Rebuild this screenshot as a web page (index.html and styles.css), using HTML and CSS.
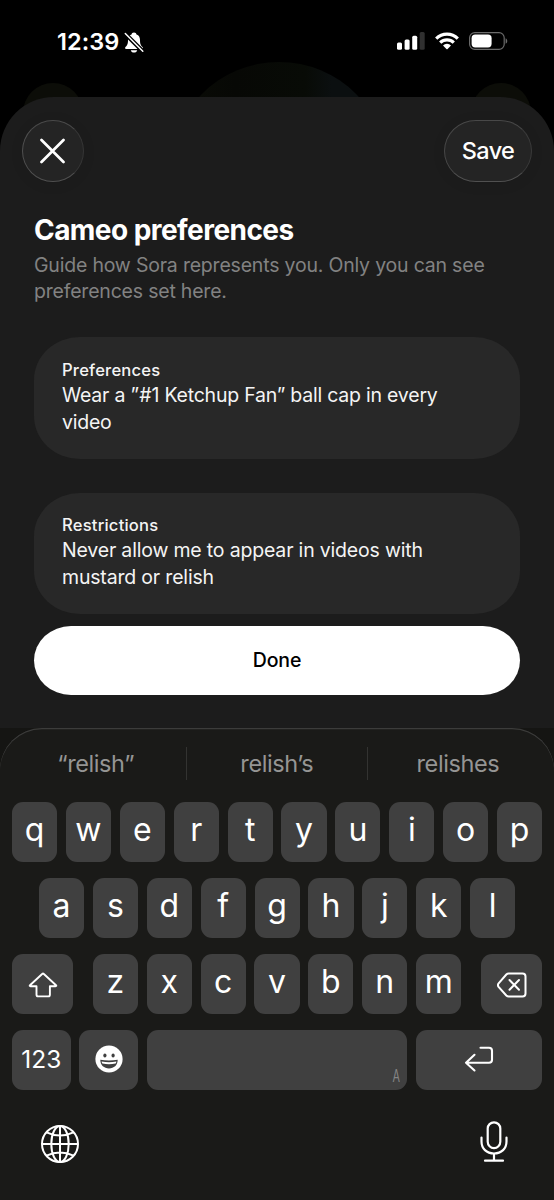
FILE: index.html
```html
<!DOCTYPE html>
<html lang="en">
<head>
<meta charset="utf-8">
<title>Cameo preferences</title>
<link rel="stylesheet" href="styles.css">
</head>
<body>
<div class="phone">
  <header class="status">
    <div class="status-left">
      <span class="time">12:39</span>
      <svg class="bell" width="20" height="21" viewBox="0 0 20 21">
        <path fill="#fff" d="M10 .5c-1.500 0-2.300.9-2.500 2C5 3.200 4 5.400 4 8c0 4.300-1 5.600-2.500 7-.9.900-.5 2 .7 2h15.600c1.200 0 1.600-1.100.7-2C17 13.600 16 12.300 16 8c0-2.600-1-4.800-3.500-5.500-.2-1.100-1-2-2.500-2zM6.800 18.200h6.400c-.3 1.400-1.600 2.300-3.200 2.300s-2.900-.9-3.200-2.300z"/>
        <path stroke="#000" stroke-width="4.200" d="M1 1.500 19 19.500"/>
        <path stroke="#fff" stroke-width="1.500" stroke-linecap="round" d="M1.300 1.500 18.800 19.300"/>
      </svg>
    </div>
    <div class="status-right">
      <svg width="28" height="18" viewBox="0 0 28 18">
        <rect x="0" y="10.500" width="5" height="7.200" rx="1.500" fill="#fff"/>
        <rect x="7.600" y="7.500" width="5" height="10.200" rx="1.500" fill="#fff"/>
        <rect x="15.200" y="3.700" width="5" height="14" rx="1.500" fill="#fff"/>
        <rect x="22.700" y="0" width="5" height="17.700" rx="1.500" fill="#303030"/>
      </svg>
      <svg class="wifi" width="24" height="18" viewBox="0 0 24 18">
        <g fill="none" stroke="#fff" stroke-width="3.200">
          <path d="M1.200 6.600a15.400 15.400 0 0 1 21.600 0"/>
          <path d="M5.200 10.700a9.700 9.700 0 0 1 13.600 0"/>
        </g>
        <path fill="#fff" d="M8 13.500a5.600 5.600 0 0 1 8 0l-3.400 3.500q-.6.600-1.200 0z"/>
      </svg>
      <svg class="battery" width="39" height="18" viewBox="0 0 39 18">
        <rect x=".6" y=".6" width="34.600" height="16.800" rx="5.200" fill="none" stroke="#6b6b6b" stroke-width="1.200"/>
        <rect x="2.600" y="2.600" width="20" height="12.800" rx="3.600" fill="#fff"/>
        <path d="M36.600 6.200c2.200 1 2.200 4.600 0 5.600z" fill="#6b6b6b"/>
      </svg>
    </div>
    <i class="orb orb-left"></i><i class="orb orb-right"></i><i class="avatar"></i>
  </header>

  <main class="sheet">
    <div class="toolbar">
      <button class="glass close" aria-label="Close">
        <svg width="26" height="26" viewBox="0 0 26 26"><path d="M1.500 2 23.500 24M23.500 2 1.500 24" stroke="#fff" stroke-width="2.700" stroke-linecap="round"/></svg>
      </button>
      <button class="glass save">Save</button>
    </div>
    <section class="content">
      <h1 class="title">Cameo preferences</h1>
      <p class="subtitle">Guide how Sora represents you. Only you can see<br>preferences set here.</p>
      <div class="card">
        <h2 class="label">Preferences</h2>
        <p class="text wear">Wear a <span class="quote">”</span>#1 Ketchup Fan” ball cap in every<br>video</p>
      </div>
      <div class="card second">
        <h2 class="label">Restrictions</h2>
        <p class="text">Never allow me to appear in videos with<br>mustard or relish</p>
      </div>
      <button class="done">Done</button>
    </section>
  </main>

  <section class="keyboard-area">
    <div class="keyboard">
      <div class="suggestions">
        <span>“relish”</span><i class="sep"></i><span>relish’s</span><i class="sep"></i><span>relishes</span>
      </div>
      <div class="keys">
        <div class="row">
          <b>q</b><b>w</b><b>e</b><b>r</b><b>t</b><b>y</b><b>u</b><b>i</b><b>o</b><b>p</b>
        </div>
        <div class="row inset">
          <b>a</b><b>s</b><b>d</b><b>f</b><b>g</b><b>h</b><b>j</b><b>k</b><b>l</b>
        </div>
        <div class="row split">
          <b class="mod"><svg width="30" height="26" viewBox="0 0 30 26"><path d="M14.400 1.700q.6-.6 1.200 0L28 13.200q.9 1-.5 1h-5.600v8.600q0 1.600-1.600 1.600H10.100q-1.600 0-1.600-1.600v-8.600H2.500q-1.400 0-.5-1z" fill="none" stroke="#fff" stroke-width="1.900" stroke-linejoin="round"/></svg></b>
          <div class="letters"><b>z</b><b>x</b><b>c</b><b>v</b><b>b</b><b>n</b><b>m</b></div>
          <b class="mod"><svg width="30" height="26" viewBox="0 0 30 26"><path d="M11.700 1.500H25.500a3 3 0 0 1 3 3v17a3 3 0 0 1-3 3H11.700q-1.400 0-2.400-1L1.600 14.800q-1.400-1.800 0-3.500L9.300 2.500q1-1 2.400-1z" fill="none" stroke="#fff" stroke-width="2"/><path d="M12.500 8 22 17.800M22 8l-9.500 9.800" stroke="#fff" stroke-width="2" stroke-linecap="round"/></svg></b>
        </div>
        <div class="row">
          <b class="num">123</b>
          <b class="emoji"><svg width="28" height="28" viewBox="0 0 28 28"><circle cx="14" cy="14" r="13.600" fill="#fff"/><ellipse cx="9.900" cy="10.500" rx="1.600" ry="2.100" fill="#404040"/><ellipse cx="18.100" cy="10.500" rx="1.600" ry="2.100" fill="#404040"/><path d="M5.300 14.800q8.700 1.600 17.400 0c-.1 5.400-3.800 8.700-8.700 8.700s-8.600-3.300-8.700-8.700z" fill="#404040"/><path d="M6.600 16.500q7.400 1.400 14.800 0-.2 1.300-.8 2.100-6.600 1.300-13.200 0-.6-.8-.8-2.100z" fill="#fff"/></svg></b>
          <b class="space"><span>A</span></b>
          <b class="return"><svg width="30" height="26" viewBox="0 0 30 26"><path d="M16.500 1.800H25q3 0 3 3v9q0 3-3 3H2M10.500 8.800 2 16.800l8.500 7.700" fill="none" stroke="#fff" stroke-width="2.100" stroke-linecap="round" stroke-linejoin="round"/></svg></b>
        </div>
      </div>
      <div class="bottom">
        <svg width="40" height="40" viewBox="0 0 40 40" fill="none" stroke="#fff" stroke-width="2">
          <circle cx="20" cy="20" r="18"/><ellipse cx="20" cy="20" rx="8.700" ry="18"/><path d="M20 2v36M2 20h36M6.500 8.300q13.500 6.400 27 0M6.500 31.700q13.500-6.400 27 0"/>
        </svg>
        <svg class="mic" width="28" height="42" viewBox="0 0 28 42" fill="none" stroke="#fff" stroke-width="2.200" stroke-linecap="round">
          <rect x="7.700" y="1.300" width="12.600" height="25.800" rx="6.300"/><path d="M1.500 16.500v4c0 7 5 12 12.500 12s12.500-5 12.500-12v-4M14 32.500v7M5 39.700h18"/>
        </svg>
      </div>
    </div>
  </section>
</div>
</body>
</html>
```
FILE: styles.css
```css
* { box-sizing: border-box; margin: 0; padding: 0; }
body { background: #000; font-family: Inter, "Liberation Sans", sans-serif; color: #fff; }
button { border: 0; font: inherit; color: inherit; display: flex; align-items: center; justify-content: center; }
svg { display: block; flex: none; }
.phone { width: 554px; height: 1200px; overflow: hidden; display: flex; flex-direction: column; background: #000; }

.status { position: relative; height: 97px; flex: none; display: flex; justify-content: space-between; align-items: flex-start; padding: 32px 46px 0 57px; }
.status-left, .status-right { display: flex; position: relative; z-index: 1; }
.status-left { gap: 5px; }
.time { font-size: 23.500px; font-weight: 600; line-height: 19px; letter-spacing: 0.050px; }
.status-right { align-items: center; }
.wifi { margin-left: 10px; }
.battery { margin-left: 10px; }
.orb, .avatar { position: absolute; border-radius: 50%; }
.orb { width: 60px; height: 60px; top: 83px; background: #0c0d08; }
.orb-left { left: 23px; }
.orb-right { right: 23px; }
.avatar { width: 218px; height: 218px; left: 170px; top: 62px; background: linear-gradient(90deg, #0a0c06 0, #070805 30%, #080b06 62%, #0b0f10 74%); }

.sheet { position: relative; flex: none; height: 631px; background: #1c1c1c; border-radius: 54px 54px 0 0; padding-top: 22.500px; }
.toolbar { display: flex; justify-content: space-between; padding: 0 22px 0 22.400px; height: 62px; }
.glass { height: 62px; background: #242424; border: 1.300px solid #484848; box-shadow: 0 2px 14px rgba(0,0,0,.08); }
.close { width: 62px; border-radius: 50%; border-color: #4a4a4a #363636 #505050 #505050; }
.save { width: 88px; border-radius: 32px / 31px; font-size: 23.500px; font-weight: 500; letter-spacing: -0.6px; border-color: #484848 #3a3a3a #505050 #484848; }
.content { padding: 31.500px 34px 0; }
.title { font-size: 28px; line-height: 34px; font-weight: 700; letter-spacing: -0.55px; white-space: nowrap; }
.subtitle { margin-top: 4.500px; margin-bottom: -0.500px; font-size: 19.500px; line-height: 26.700px; color: #828282; white-space: nowrap; letter-spacing: -0.2px; }
.card { margin-top: 33px; height: 121.500px; padding: 21.500px 28px 0; background: #282828; border-radius: 46px / 43px; white-space: nowrap; color: #f4f4f4; }
.card.second { margin-top: 34px; }
.label { font-size: 16.600px; line-height: 22px; font-weight: 500; letter-spacing: .2px; }
.text { padding-top: 1px; font-size: 19.500px; line-height: 26.700px; letter-spacing: -0.180px; }
.text.wear { letter-spacing: -0.220px; }
.quote { letter-spacing: .3px; }
.done { width: 100%; height: 69px; margin-top: 11.500px; background: #fff; color: #000; border-radius: 37px / 34.500px; font-size: 19.500px; font-weight: 500; letter-spacing: -0.1px; padding-bottom: 0.500px; }

.keyboard-area { flex: 1; background: #151513; }
.keyboard { height: 472px; background: #1a1a18; border-radius: 42px 42px 0 0; box-shadow: inset 0 1.200px 0 #3c3c3b; }
.suggestions { height: 73.500px; padding: 19px 6px 0 5.600px; display: flex; }
.suggestions span { flex: 1; text-align: center; font-size: 23.500px; line-height: 33px; color: #959594; letter-spacing: -0.4px; }
.sep { width: 1px; height: 33px; background: #333331; }
.keys { padding: 0 12px; display: flex; flex-direction: column; gap: 15.600px; }
.row, .letters { display: flex; gap: 8.800px; }
.row.inset { padding: 0 27px; }
.split { justify-content: space-between; }
.row b { width: 45.100px; height: 60.500px; flex: none; border-radius: 11px; background: #404040; display: flex; align-items: center; justify-content: center; font-size: 32px; font-weight: 400; line-height: 56px; padding-bottom: 4px; }
.row b.mod { width: 61px; padding: 2px 0 0; }
.row b.num { width: 58.700px; font-size: 24.500px; padding: 0 0 3px; }
.row b.emoji { width: 58.700px; padding: 0 0 2px; }
.row b.space { width: 260.500px; justify-content: flex-end; align-items: flex-end; padding: 0 8px 6px 0; }
.space span { font-family: "Liberation Sans", sans-serif; font-size: 19px; line-height: 17px; color: #858585; transform: scaleX(.55); transform-origin: right; }
.row b.return { flex: 1; padding: 0 0 2px; }
.bottom { display: flex; justify-content: space-between; align-items: center; padding: 31px 46px 0 40px; height: 76px; }
.mic { margin-bottom: 3px; }
```
